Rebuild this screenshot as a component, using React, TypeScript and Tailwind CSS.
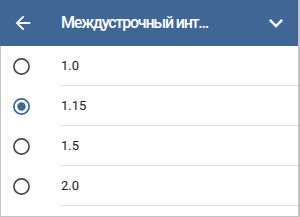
import React from "react";

const options = ["1.0", "1.15", "1.5", "2.0"];
const selected = "1.15";

function Radio({ checked }: { checked: boolean }) {
  return (
    <svg width="17" height="17" viewBox="0 0 17 17">
      <circle
        cx="8.5"
        cy="8.5"
        r="7.6"
        fill="none"
        stroke={checked ? "#3f6694" : "#4a4a4a"}
        strokeWidth="1.7"
      />
      {checked && <circle cx="8.5" cy="8.5" r="4.2" fill="#3f6694" />}
    </svg>
  );
}

export default function App() {
  return (
    <div
      className="w-[300px] h-[217px] flex flex-col bg-white border-r-2 border-[#c4c4c4] overflow-hidden"
      style={{ fontFamily: "Roboto, 'Noto Sans', sans-serif" }}
    >
      <div className="h-[46px] shrink-0 bg-[#3f6694] flex items-center text-white">
        <div className="w-[60px] flex items-center pl-[12px]">
          <svg width="22" height="22" viewBox="0 0 24 24" fill="white">
            <path d="M20 11H7.83l5.59-5.59L12 4l-8 8 8 8 1.41-1.41L7.83 13H20v-2z" />
          </svg>
        </div>
        <div className="flex-1 pl-[1px] font-['Roboto',sans-serif] text-[16px] font-medium leading-none whitespace-nowrap tracking-[-1.2px]">
          Междустрочный инт...
        </div>
        <div className="w-[36px] flex items-center">
          <svg width="28" height="28" viewBox="0 0 24 24" fill="white">
            <path d="M16.59 8.59L12 13.17 7.41 8.59 6 10l6 6 6-6z" />
          </svg>
        </div>
      </div>
      <div className="flex-1 flex flex-col border-l border-b border-[#c4c4c4]">
        {options.map((o) => (
          <div key={o} className="h-[40px] flex">
            <div className="w-[59px] flex items-center pl-[12px]">
              <Radio checked={o === selected} />
            </div>
            <div className="flex-1 flex items-center border-b border-[#e6e6e6] pl-[1px] text-[13px] text-[#212121]">
              {o}
            </div>
          </div>
        ))}
      </div>
    </div>
  );
}
